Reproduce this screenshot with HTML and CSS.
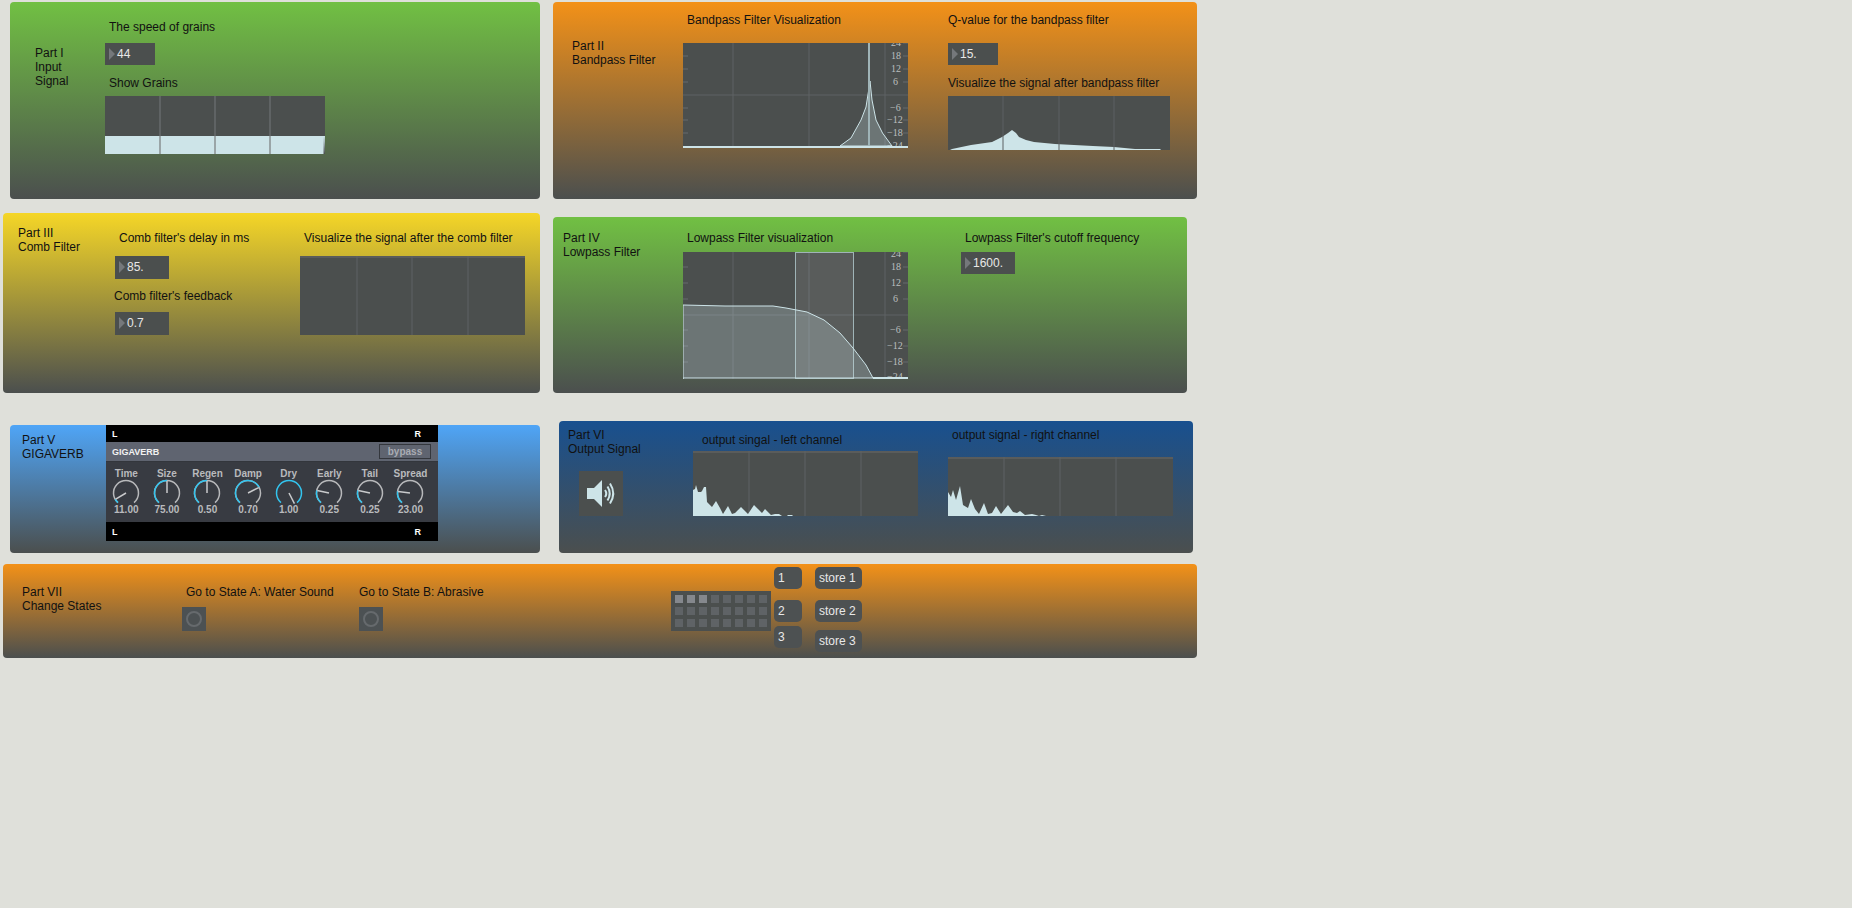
FILE: index.html
```html
<!DOCTYPE html>
<html lang="en">
<head>
    <meta charset="UTF-8">
    <title>Granular Patch</title>
    <link rel="stylesheet" href="styles.css">
</head>
<body>
    <div class="patcher">

        <!-- Part I -->
        <section class="panel green p1">
            <div class="title">Part I<br>Input<br>Signal</div>
            <div class="col">
                <div class="lbl">The speed of grains</div>
                <div class="num">44</div>
                <div class="lbl">Show Grains</div>
                <svg class="scope" width="220" height="58" viewBox="0 0 220 58">
                    <path class="grid thick" d="M55 0V40M110 0V40M165 0V40"/>
                    <rect class="sig" y="40" width="220" height="18"/>
                    <path class="cut" d="M219 40L220 58H218.500Z"/>
                    <path class="grid thick over" d="M55 40V58M110 40V58M165 40V58"/>
                </svg>
            </div>
        </section>

        <!-- Part II -->
        <section class="panel orange p2">
            <div class="title">Part II<br>Bandpass Filter</div>
            <div class="col">
                <div class="lbl">Bandpass Filter Visualization</div>
                <svg class="scope" width="225" height="105" viewBox="0 0 225 105">
                    <path class="grid" d="M50 0V105M126 0V105M202 0V105M0 52H225"/>
                    <path class="tick" d="M220 0H225M220 13H225M220 26H225M220 39H225M220 65H225M220 77H225M220 90H225M0 13H5M0 26H5M0 39H5M0 65H5M0 77H5M0 90H5"/>
                    <g class="axis">
                        <text x="208" y="3">24</text>
                        <text x="208" y="16">18</text>
                        <text x="208" y="29">12</text>
                        <text x="210" y="42">6</text>
                        <text x="207" y="68">−6</text>
                        <text x="204" y="80">−12</text>
                        <text x="204" y="93">−18</text>
                        <text x="204" y="106">−24</text>
                    </g>
                    <path class="curve" d="M157 103L168 95L178 77L183 64L186 45L187 38L189 57L193 77L199.500 90L209 103Z"/>
                    <rect class="marker" x="185" width="2" height="105"/>
                    <rect class="sig" y="103" width="225" height="2"/>
                </svg>
            </div>
            <div class="col">
                <div class="lbl">Q-value for the bandpass filter</div>
                <div class="num">15.</div>
                <div class="lbl">Visualize the signal after bandpass filter</div>
                <svg class="scope" width="222" height="54" viewBox="0 0 222 54">
                    <polygon class="sig" points="2,54 4,53 23,49 44,46 54,41 60,37 64,34 68,37 71,41 78,44 86,46 107,48 145,50 166,51 187,53 212,53 213,54"/>
                    <path class="grid dark" d="M55 0V54M111 0V54M166 0V54"/>
                </svg>
            </div>
        </section>

        <!-- Part III -->
        <section class="panel yellow p3">
            <div class="title">Part III<br>Comb Filter</div>
            <div class="col">
                <div class="lbl">Comb filter's delay in ms</div>
                <div class="num">85.</div>
                <div class="lbl">Comb filter's feedback</div>
                <div class="num">0.7</div>
            </div>
            <div class="col">
                <div class="lbl">Visualize the signal after the comb filter</div>
                <svg class="scope" width="225" height="79" viewBox="0 0 225 79">
                    <rect class="topline" width="225" height="2"/>
                    <path class="grid" d="M57 0V79M112 0V79M168 0V79"/>
                </svg>
            </div>
        </section>

        <!-- Part IV -->
        <section class="panel green p4">
            <div class="title">Part IV<br>Lowpass Filter</div>
            <div class="col">
                <div class="lbl">Lowpass Filter visualization</div>
                <svg class="scope" width="225" height="127" viewBox="0 0 225 127">
                    <path class="grid" d="M50 0V127M126 0V127M202 0V127M0 63H225"/>
                    <path class="tick" d="M220 0H225M220 15H225M220 31H225M220 47H225M220 78H225M220 94H225M220 110H225M0 15H5M0 31H5M0 47H5M0 78H5M0 94H5M0 110H5"/>
                    <g class="axis">
                        <text x="208" y="5">24</text>
                        <text x="208" y="18">18</text>
                        <text x="208" y="34">12</text>
                        <text x="210" y="50">6</text>
                        <text x="207" y="81">−6</text>
                        <text x="204" y="97">−12</text>
                        <text x="204" y="113">−18</text>
                        <text x="204" y="128">−24</text>
                    </g>
                    <rect class="band" x="112.500" y="0.500" width="58" height="126"/>
                    <path class="curve" d="M0 127V53L42 54L90 54L103 56L124 60L141 68L157 81L170 96L183 113L190 126H0Z"/>
                    <rect class="sig" x="190" y="125" width="35" height="2"/>
                </svg>
            </div>
            <div class="col">
                <div class="lbl">Lowpass Filter's cutoff frequency</div>
                <div class="num">1600.</div>
            </div>
        </section>

        <!-- Part V -->
        <section class="panel blue p5">
            <div class="title">Part V<br>GIGAVERB</div>
            <div class="giga">
                <div class="giga-bar top"><span>L</span><span>R</span></div>
                <div class="giga-head">
                    <span>GIGAVERB</span>
                    <span class="bypass">bypass</span>
                </div>
                <div class="giga-body">
                    <div class="knob">
                        <div class="knob-name">Time</div>
                        <svg width="30" height="30" viewBox="0 0 30 30">
                            <path class="arc" d="M6.970 24.580A12.500 12.500 0 1 1 23.030 24.580"/>
                            <path class="arc on" pathLength="280" stroke-dasharray="19 280" d="M6.970 24.580A12.500 12.500 0 1 1 23.030 24.580"/>
                            <line class="needle" x1="15" y1="15" x2="15" y2="3" transform="rotate(-121 15 15)"/>
                        </svg>
                        <div class="knob-val">11.00</div>
                    </div>
                    <div class="knob">
                        <div class="knob-name">Size</div>
                        <svg width="30" height="30" viewBox="0 0 30 30">
                            <path class="arc" d="M6.970 24.580A12.500 12.500 0 1 1 23.030 24.580"/>
                            <path class="arc on" pathLength="280" stroke-dasharray="140 280" d="M6.970 24.580A12.500 12.500 0 1 1 23.030 24.580"/>
                            <line class="needle" x1="15" y1="15" x2="15" y2="3"/>
                        </svg>
                        <div class="knob-val">75.00</div>
                    </div>
                    <div class="knob">
                        <div class="knob-name">Regen</div>
                        <svg width="30" height="30" viewBox="0 0 30 30">
                            <path class="arc" d="M6.970 24.580A12.500 12.500 0 1 1 23.030 24.580"/>
                            <path class="arc on" pathLength="280" stroke-dasharray="140 280" d="M6.970 24.580A12.500 12.500 0 1 1 23.030 24.580"/>
                            <line class="needle" x1="15" y1="15" x2="15" y2="3"/>
                        </svg>
                        <div class="knob-val">0.50</div>
                    </div>
                    <div class="knob">
                        <div class="knob-name">Damp</div>
                        <svg width="30" height="30" viewBox="0 0 30 30">
                            <path class="arc" d="M6.970 24.580A12.500 12.500 0 1 1 23.030 24.580"/>
                            <path class="arc on" pathLength="280" stroke-dasharray="203 280" d="M6.970 24.580A12.500 12.500 0 1 1 23.030 24.580"/>
                            <line class="needle" x1="15" y1="15" x2="15" y2="3" transform="rotate(63 15 15)"/>
                        </svg>
                        <div class="knob-val">0.70</div>
                    </div>
                    <div class="knob">
                        <div class="knob-name">Dry</div>
                        <svg width="30" height="30" viewBox="0 0 30 30">
                            <path class="arc on" d="M6.970 24.580A12.500 12.500 0 1 1 23.030 24.580"/>
                            <line class="needle" x1="15" y1="15" x2="15" y2="3" transform="rotate(153 15 15)"/>
                        </svg>
                        <div class="knob-val">1.00</div>
                    </div>
                    <div class="knob">
                        <div class="knob-name">Early</div>
                        <svg width="30" height="30" viewBox="0 0 30 30">
                            <path class="arc" d="M6.970 24.580A12.500 12.500 0 1 1 23.030 24.580"/>
                            <path class="arc on" pathLength="280" stroke-dasharray="62 280" d="M6.970 24.580A12.500 12.500 0 1 1 23.030 24.580"/>
                            <line class="needle" x1="15" y1="15" x2="15" y2="3" transform="rotate(-78 15 15)"/>
                        </svg>
                        <div class="knob-val">0.25</div>
                    </div>
                    <div class="knob">
                        <div class="knob-name">Tail</div>
                        <svg width="30" height="30" viewBox="0 0 30 30">
                            <path class="arc" d="M6.970 24.580A12.500 12.500 0 1 1 23.030 24.580"/>
                            <path class="arc on" pathLength="280" stroke-dasharray="62 280" d="M6.970 24.580A12.500 12.500 0 1 1 23.030 24.580"/>
                            <line class="needle" x1="15" y1="15" x2="15" y2="3" transform="rotate(-78 15 15)"/>
                        </svg>
                        <div class="knob-val">0.25</div>
                    </div>
                    <div class="knob">
                        <div class="knob-name">Spread</div>
                        <svg width="30" height="30" viewBox="0 0 30 30">
                            <path class="arc" d="M6.970 24.580A12.500 12.500 0 1 1 23.030 24.580"/>
                            <path class="arc on" pathLength="280" stroke-dasharray="57 280" d="M6.970 24.580A12.500 12.500 0 1 1 23.030 24.580"/>
                            <line class="needle" x1="15" y1="15" x2="15" y2="3" transform="rotate(-83 15 15)"/>
                        </svg>
                        <div class="knob-val">23.00</div>
                    </div>
                </div>
                <div class="giga-bar bottom"><span>L</span><span>R</span></div>
            </div>
        </section>

        <!-- Part VI -->
        <section class="panel navy p6">
            <div class="left">
                <div class="title">Part VI<br>Output Signal</div>
                <div class="speaker">
                    <svg width="44" height="45" viewBox="0 0 44 45">
                        <path class="cone" d="M8 17H15L23 9V36L15 28H8Z"/>
                        <path class="wave" d="M26 19Q28.500 22.500 26 26M28.500 15.500Q33 22.500 28.500 29.500M31 12.500Q37.500 22.500 31 32.500"/>
                    </svg>
                </div>
            </div>
            <div class="col">
                <div class="lbl">output singal - left channel</div>
                <svg class="scope" width="225" height="65" viewBox="0 0 225 65">
                    <rect class="topline" width="225" height="2"/>
                    <path class="grid" d="M56 0V65M112 0V65M168 0V65"/>
                    <polygon class="sig" points="0,65 0,39 2,38 3,34 5,41 8,41 9,40 11,36 13,36 14,51 19,56 23,50 27,57 30,63 35,55 39,63 42,62 48,56 55,63 61,54 66,59 69,62 72,58 78,64 82,63 86,63 89,65 94,65 95,64 99,64 100,65"/>
                </svg>
            </div>
            <div class="col">
                <div class="lbl">output signal - right channel</div>
                <svg class="scope" width="225" height="59" viewBox="0 0 225 59">
                    <rect class="topline" width="225" height="2"/>
                    <path class="grid" d="M56 0V59M112 0V59M168 0V59"/>
                    <polygon class="sig" points="0,59 0,35 3,40 5,33 8,43 12,29 15,48 20,51 23,42 27,52 31,57 36,46 40,57 44,56 48,49 53,57 60,48 65,55 69,56 72,54 77,58 84,57 88,58 91,59 94,58 98,59"/>
                </svg>
            </div>
        </section>

        <!-- Part VII -->
        <section class="panel orange p7">
            <div class="title">Part VII<br>Change States</div>
            <div class="col">
                <div class="lbl">Go to State A: Water Sound</div>
                <div class="toggle"><span></span></div>
            </div>
            <div class="col">
                <div class="lbl">Go to State B: Abrasive</div>
                <div class="toggle"><span></span></div>
            </div>
            <div class="preset">
                <i class="lit"></i><i class="lit"></i><i class="lit"></i><i></i><i></i><i></i><i></i><i></i>
                <i></i><i></i><i></i><i></i><i></i><i></i><i></i><i></i>
                <i></i><i></i><i></i><i></i><i></i><i></i><i></i><i></i>
            </div>
            <div class="col recall">
                <div class="btn">1</div>
                <div class="btn">2</div>
                <div class="btn">3</div>
            </div>
            <div class="col store">
                <div class="btn">store 1</div>
                <div class="btn">store 2</div>
                <div class="btn">store 3</div>
            </div>
        </section>

    </div>
</body>
</html>
```

FILE: styles.css
```css
* {
    box-sizing: border-box;
    margin: 0;
    padding: 0;
}

body {
    font-family: "Liberation Sans", Arial, sans-serif;
    font-size: 12px;
    background: #dfe0da;
    color: #111;
    overflow: hidden;
}

.patcher {
    position: relative;
    width: 1852px;
    height: 908px;
}

/* panels sit on the free patcher canvas */
.panel {
    position: absolute;
    display: flex;
    align-items: flex-start;
    border-radius: 4px;
}

.green { background: linear-gradient(#71c043, #4b4f4e); }
.orange { background: linear-gradient(#f39118, #4b4f4e); }
.yellow { background: linear-gradient(#f5d627, #4b4f4e); }
.blue { background: linear-gradient(#4fa5f7, #4b4f4e); }
.navy { background: linear-gradient(#18508f, #4b4f4e); }

.title {
    line-height: 14px;
    white-space: nowrap;
    flex: none;
}

.col {
    display: flex;
    flex-direction: column;
    align-items: flex-start;
    flex: none;
}

.lbl {
    height: 14px;
    line-height: 14px;
    white-space: nowrap;
    padding-left: 4px;
}

.num {
    position: relative;
    width: 50px;
    height: 22px;
    line-height: 22px;
    padding-left: 12px;
    background: #4b4f4e;
    color: #e8e8e8;
}

.num::before {
    content: "";
    position: absolute;
    left: 4px;
    top: 5px;
    border-left: 6px solid #75787b;
    border-top: 6px solid transparent;
    border-bottom: 6px solid transparent;
}

.scope {
    display: block;
    background: #4b4f4e;
}

.sig { fill: #cde4e8; }
.cut { fill: #4b4f4e; }
.topline { fill: #5a5c5b; }

.grid {
    fill: none;
    stroke: #5f6364;
    stroke-width: 1;
}

.grid.thick { stroke-width: 2; }
.grid.thick.over { stroke: #9aa5a7; }
.grid.dark { stroke: #5d6162; }

.tick {
    fill: none;
    stroke: #666a6c;
}

.axis text {
    font-family: "Liberation Serif", serif;
    font-size: 10px;
    fill: #bcbfbf;
}

.curve {
    fill: rgba(205, 228, 232, 0.26);
    stroke: #cde4e8;
}

.marker { fill: #9fb4b7; }

.band {
    fill: rgba(255, 255, 255, 0.08);
    stroke: #9fb4b7;
}

/* part I */
.p1 { left: 10px; top: 2px; width: 530px; height: 197px; }
.p1 .title { width: 70px; margin: 44px 0 0 25px; }
.p1 .col { margin-top: 18px; }
.p1 .num { margin-top: 9px; }
.p1 .lbl + .num + .lbl { margin-top: 11px; }
.p1 .scope { margin-top: 6px; }

/* part II */
.p2 { left: 553px; top: 2px; width: 644px; height: 197px; }
.p2 .title { width: 111px; margin: 37px 0 0 19px; }
.p2 .col { margin-top: 11px; }
.p2 .lbl { padding-left: 4px; }
.p2 .col + .col { margin-left: 40px; }
.p2 .col + .col .lbl { padding-left: 0; }
.p2 .scope { margin-top: 16px; }
.p2 .num { margin-top: 16px; }
.p2 .num + .lbl { margin-top: 11px; }
.p2 .num + .lbl + .scope { margin-top: 6px; }

/* part III */
.p3 { left: 3px; top: 213px; width: 537px; height: 180px; }
.p3 .title { width: 97px; margin: 13px 0 0 15px; }
.p3 .col { margin-top: 18px; width: 185px; }
.p3 .col + .col { width: 225px; }
.p3 .num { width: 54px; height: 23px; line-height: 23px; margin-top: 11px; }
.p3 .num + .lbl { margin: 10px 0 0 -1px; padding-left: 0; }
.p3 .num + .lbl + .num { margin-top: 9px; }
.p3 .scope { margin-top: 11px; }

/* part IV */
.p4 { left: 553px; top: 217px; width: 634px; height: 176px; }
.p4 .title { width: 120px; margin: 14px 0 0 10px; }
.p4 .col { margin-top: 14px; }
.p4 .col + .col { margin-left: 53px; }
.p4 .scope { margin-top: 7px; }
.p4 .num { width: 54px; margin-top: 7px; }

/* part V */
.p5 { left: 10px; top: 425px; width: 530px; height: 128px; }
.p5 .title { width: 84px; margin: 8px 0 0 12px; }

.giga {
    width: 332px;
    height: 116px;
    display: flex;
    flex-direction: column;
    flex: none;
}

.giga-bar {
    display: flex;
    justify-content: space-between;
    align-items: center;
    padding: 0 17px 0 6px;
    background: #000;
    color: #fff;
    font-size: 9px;
    font-weight: bold;
}

.giga-bar.top { height: 17px; }
.giga-bar.bottom { height: 19px; }

.giga-head {
    height: 20px;
    display: flex;
    justify-content: space-between;
    align-items: center;
    padding: 0 7px 0 6px;
    background: #5f6470;
    color: #f2f2f2;
    font-size: 9px;
    font-weight: bold;
    border-bottom: 1px solid #33363c;
}

.bypass {
    width: 52px;
    height: 15px;
    line-height: 13px;
    text-align: center;
    border: 1px solid #34373d;
    color: #a9acb3;
    font-size: 10px;
}

.giga-body {
    height: 60px;
    display: grid;
    grid-template-columns: repeat(8, 40.600px);
    background: #383b42;
}

.knob {
    display: flex;
    flex-direction: column;
    align-items: center;
    color: #b9babd;
    font-size: 10px;
    font-weight: bold;
}

.knob svg { display: block; margin-top: -1px; }

.knob-name {
    height: 10px;
    line-height: 10px;
    margin-top: 7px;
    white-space: nowrap;
}

.knob-val {
    height: 10px;
    line-height: 10px;
    margin-top: -3px;
    position: relative;
}

.arc {
    fill: none;
    stroke: #b8b9bb;
    stroke-width: 1.500;
}

.arc.on { stroke: #33c4ee; }

.needle {
    stroke: #c9cacc;
    stroke-width: 1.500;
}

/* part VI */
.p6 { left: 559px; top: 421px; width: 634px; height: 132px; }
.p6 .left { width: 134px; flex: none; }
.p6 .title { margin: 7px 0 0 9px; }

.speaker {
    width: 44px;
    height: 45px;
    margin: 15px 0 0 20px;
    background: #4b4f4e;
}

.speaker svg { display: block; }
.cone { fill: #cde4e8; }

.wave {
    fill: none;
    stroke: #cde4e8;
    stroke-width: 2;
}

.p6 .col { margin-top: 12px; }
.p6 .col .lbl { padding-left: 9px; }
.p6 .scope { margin-top: 4px; }
.p6 .col + .col { margin: 7px 0 0 30px; }
.p6 .col + .col .lbl { padding-left: 4px; }
.p6 .col + .col .scope { margin-top: 15px; }

/* part VII */
.p7 { left: 3px; top: 564px; width: 1194px; height: 94px; }
.p7 .title { width: 160px; margin: 21px 0 0 19px; }
.p7 .col { margin-top: 21px; width: 177px; }
.p7 .col + .col { width: 312px; }
.p7 .col + .col .lbl { padding-left: 0; }

.toggle {
    width: 24px;
    height: 24px;
    margin-top: 8px;
    display: flex;
    align-items: center;
    justify-content: center;
    background: #4c5153;
}

.toggle span {
    width: 16px;
    height: 16px;
    border: 2px solid #666a6d;
    border-radius: 50%;
}

.preset {
    width: 100px;
    height: 40px;
    margin-top: 27px;
    padding: 4px;
    flex: none;
    display: grid;
    grid-template-columns: repeat(8, 8px);
    grid-auto-rows: 8px;
    gap: 4px;
    background: #4b4f4e;
}

.preset i { background: #5f6366; }
.preset i.lit { background: #85888d; }

.btn {
    height: 22px;
    line-height: 22px;
    padding-left: 4px;
    border-radius: 5px;
    background: #4d5152;
    color: #e8e8e8;
    white-space: nowrap;
}

.p7 .col.recall { width: 28px; margin: 3px 0 0 3px; }
.p7 .col.store { width: 47px; margin: 3px 0 0 13px; }
.col.recall .btn, .col.store .btn { width: 100%; }
.btn:nth-child(2) { margin-top: 11px; }
.recall .btn:nth-child(3) { margin-top: 4px; }
.store .btn:nth-child(3) { margin-top: 8px; }
```
